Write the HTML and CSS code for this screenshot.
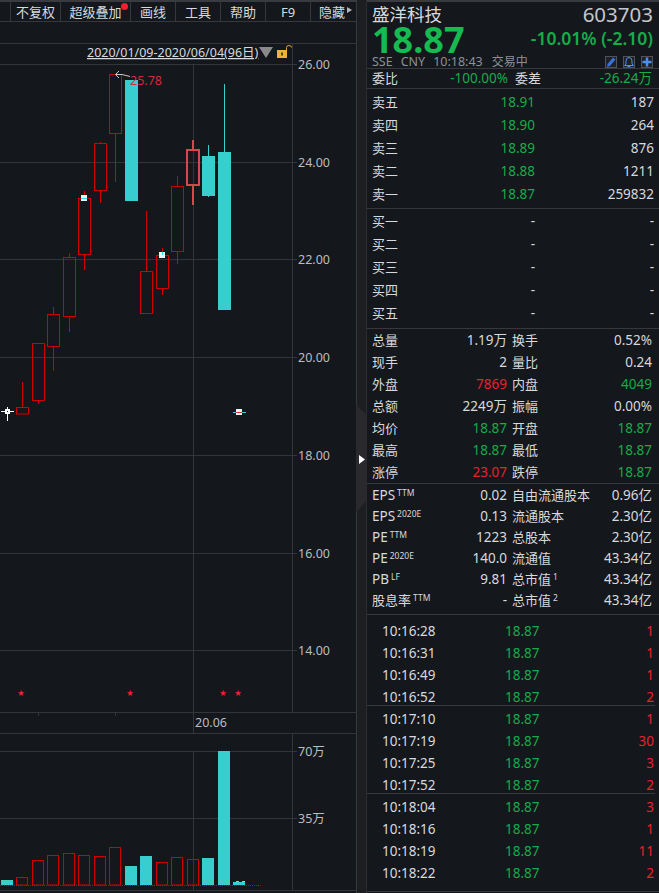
FILE: index.html
```html
<!DOCTYPE html>
<html lang="zh-CN">
<head>
<meta charset="utf-8">
<title>盛洋科技 603703</title>
<link rel="stylesheet" href="styles.css">
</head>
<body>
<div class="app">
  <section class="chart-col">
    <nav class="toolbar">
      <span class="tool tool-blank"></span>
      <span class="tool tool-w50">不复权</span>
      <span class="tool tool-w70">超级叠加<i class="dot"></i></span>
      <span class="tool">画线</span>
      <span class="tool">工具</span>
      <span class="tool">帮助</span>
      <span class="tool">F9</span>
      <span class="tool tool-last">隐藏<i class="more"></i></span>
    </nav>
    <div class="band"></div>
    <svg class="chart" viewBox="0 43 356 850" width="356" height="850" xmlns="http://www.w3.org/2000/svg">
      <g class="grid">
        <path d="M0 64.5H297M0 162.5H297M0 259.5H297M0 357.5H297M0 455.5H297M0 553.5H297M0 650.5H297"/>
        <path d="M0 751.5H297M0 818.5H297"/>
        <path d="M193.5 64V733M193.5 751V890M292.5 43V712M292.5 733V890"/>
        <path d="M0 43.5H356M0 712.5H356M0 733.5H356M0 890.5H356"/>
        <path d="M38.5 712V716M115.5 712V716"/>
      </g>
      <g class="axis">
        <text x="298" y="69">26.00</text>
        <text x="298" y="167">24.00</text>
        <text x="298" y="264">22.00</text>
        <text x="298" y="362">20.00</text>
        <text x="298" y="460">18.00</text>
        <text x="298" y="558">16.00</text>
        <text x="298" y="655">14.00</text>
        <text x="195" y="727">20.06</text>
        <text x="298" y="756">70万</text>
        <text x="298" y="823">35万</text>
      </g>
      <text class="range" x="87" y="57">2020/01/09-2020/06/04(96日)</text>
      <polygon class="tri" points="259,47 273,47 266,58"/>
      <rect class="lock" x="277" y="50" width="10" height="8"/>
      <rect class="lock-hole" x="281" y="52.5" width="2" height="3"/>
      <path class="shackle" d="M286.5 50V47.5Q286.5 45.5 289 45.5Q291.5 45.5 291.5 47.5"/>

      <g class="up">
        <path d="M22.5 382V407M38.5 400V404M53.5 307V314M53.5 346V371M69.5 253V257M69.5 316V332M84.5 191V198M84.5 254V270M100.5 142V143M100.5 190V203M115.5 133V182M146.5 211V271M162.5 248V255M162.5 288V295M177.5 176V186M177.5 251V264"/>
        <rect x="16.5" y="407.5" width="12" height="6.5"/>
        <rect x="32.5" y="343.5" width="12" height="57"/>
        <rect x="47.5" y="314.5" width="12" height="32"/>
        <rect x="63.5" y="257.5" width="12" height="59"/>
        <rect x="78.5" y="198.5" width="12" height="56"/>
        <rect x="94.5" y="143.5" width="12" height="47"/>
        <rect x="109.5" y="74.5" width="12" height="59"/>
        <rect x="140.5" y="271.5" width="12" height="42"/>
        <rect x="156.5" y="255.5" width="12" height="33"/>
        <rect x="171.5" y="186.5" width="12" height="65"/>
      </g>
      <g class="up-hi">
        <path d="M193 140V150M193 185V205"/>
        <rect x="187" y="150" width="12" height="35"/>
      </g>
      <g class="down">
        <rect x="125" y="80" width="13" height="121"/>
        <rect x="202" y="156" width="13" height="40"/>
        <rect x="218" y="152" width="13" height="158"/>
        <rect x="208" y="145" width="1" height="52"/>
        <rect x="224" y="84" width="1" height="68"/>
        <rect x="233" y="412" width="13" height="1"/>
      </g>
      <g class="marks">
        <rect x="81" y="195" width="6" height="6"/>
        <rect x="159" y="252" width="6" height="6"/>
        <rect x="236" y="409" width="6" height="6"/>
      </g>
      <path class="mark-cy" d="M81 198.5H87M162.5 252V255"/>
      <path class="mark-rd" d="M236 412.5H242"/>
      <path class="cross" d="M1 411.5H14M7.5 407V421"/>
      <rect class="cross-core" x="5" y="409" width="5" height="5"/>
      <rect class="cross-hole" x="7" y="411" width="1" height="1"/>
      <path class="note" d="M116 74.5L122 74.5L130 76.5M119 71L115.5 74.5L119 78"/>
      <text class="hi" x="130" y="85">25.78</text>
      <g class="stars">
        <text x="21" y="695">★</text>
        <text x="130" y="695">★</text>
        <text x="223" y="695">★</text>
        <text x="238" y="695">★</text>
      </g>

      <g class="up">
        <rect x="16.5" y="877.5" width="11" height="7.5"/>
        <rect x="32.5" y="860.5" width="11" height="24.5"/>
        <rect x="47.5" y="855.5" width="11" height="29.5"/>
        <rect x="63.5" y="853.5" width="11" height="31.5"/>
        <rect x="78.5" y="855.5" width="11" height="29.5"/>
        <rect x="94.5" y="856.5" width="11" height="28.5"/>
        <rect x="109.5" y="847.5" width="11" height="37.5"/>
        <rect x="156.5" y="862.5" width="11" height="22.5"/>
        <rect x="171.5" y="857.5" width="11" height="27.5"/>
        <rect x="187.5" y="859.5" width="11" height="25.5"/>
      </g>
      <g class="down">
        <rect x="1" y="880" width="12" height="5"/>
        <rect x="125" y="866" width="12" height="19"/>
        <rect x="140" y="856" width="12" height="29"/>
        <rect x="202" y="858" width="12" height="27"/>
        <rect x="218" y="751" width="12" height="134"/>
        <rect x="233" y="882" width="12" height="3"/>
      </g>
      <path class="vol-top" d="M236 881.5H239M242 881.5H245"/>
      <path class="base" d="M0 885.5H261"/>
    </svg>
  </section>

  <div class="strip">
    <svg class="strip-art" viewBox="0 0 11 893" width="11" height="893" xmlns="http://www.w3.org/2000/svg">
      <polygon class="strip-shape" points="0,405 11,415 11,500 0,512"/>
      <polygon class="strip-arrow" points="3,455 9,459.5 3,464"/>
    </svg>
  </div>

  <aside class="panel">
    <header class="head">
      <div class="head-row head-title">
        <span class="name">盛洋科技</span>
        <span class="code">603703</span>
      </div>
      <div class="head-row head-price">
        <span class="price">18.87</span>
        <span class="change">-10.01% (-2.10)</span>
      </div>
      <div class="head-row head-meta">
        <span class="meta"><span>SSE</span><span>CNY</span><span>10:18:43</span><span class="meta-cn">交易中</span></span>
        <span class="actions">
          <svg class="act" viewBox="0 0 10 10" width="12" height="12" xmlns="http://www.w3.org/2000/svg"><path class="act-fill" d="M7 0.5L9.5 2.500L4 9L1 10L1.500 7Z"/></svg>
          <svg class="act" viewBox="0 0 10 10" width="12" height="12" xmlns="http://www.w3.org/2000/svg"><path class="act-line" d="M5 0.500Q8 0.500 8 4V7L9.500 8.500H0.500L2 7V4Q2 0.500 5 0.500ZM3.500 9.500H6.500"/></svg>
          <svg class="act" viewBox="0 0 10 10" width="12" height="12" xmlns="http://www.w3.org/2000/svg"><path class="act-plus" d="M5 0.500V9.500M0.500 5H9.500"/></svg>
        </span>
      </div>
    </header>

    <div class="commit">
      <span class="cn">委比</span><span class="num green commit-v">-100.00%</span><span class="cn commit-l2">委差</span><span class="num green commit-r">-26.24万</span>
    </div>

    <div class="book book-ask">
      <div class="level"><span class="cn">卖五</span><span class="num green ar">18.91</span><span class="num ar">187</span></div>
      <div class="level"><span class="cn">卖四</span><span class="num green ar">18.90</span><span class="num ar">264</span></div>
      <div class="level"><span class="cn">卖三</span><span class="num green ar">18.89</span><span class="num ar">876</span></div>
      <div class="level"><span class="cn">卖二</span><span class="num green ar">18.88</span><span class="num ar">1211</span></div>
      <div class="level"><span class="cn">卖一</span><span class="num green ar">18.87</span><span class="num ar">259832</span></div>
    </div>
    <div class="book book-bid">
      <div class="level"><span class="cn">买一</span><span class="num ar">-</span><span class="num ar">-</span></div>
      <div class="level"><span class="cn">买二</span><span class="num ar">-</span><span class="num ar">-</span></div>
      <div class="level"><span class="cn">买三</span><span class="num ar">-</span><span class="num ar">-</span></div>
      <div class="level"><span class="cn">买四</span><span class="num ar">-</span><span class="num ar">-</span></div>
      <div class="level"><span class="cn">买五</span><span class="num ar">-</span><span class="num ar">-</span></div>
    </div>

    <div class="stats">
      <div class="stat"><div class="pair"><span class="cn">总量</span><span class="num">1.19万</span></div><div class="pair"><span class="cn">换手</span><span class="num">0.52%</span></div></div>
      <div class="stat"><div class="pair"><span class="cn">现手</span><span class="num">2</span></div><div class="pair"><span class="cn">量比</span><span class="num">0.24</span></div></div>
      <div class="stat"><div class="pair"><span class="cn">外盘</span><span class="num red">7869</span></div><div class="pair"><span class="cn">内盘</span><span class="num green">4049</span></div></div>
      <div class="stat"><div class="pair"><span class="cn">总额</span><span class="num">2249万</span></div><div class="pair"><span class="cn">振幅</span><span class="num">0.00%</span></div></div>
      <div class="stat"><div class="pair"><span class="cn">均价</span><span class="num green">18.87</span></div><div class="pair"><span class="cn">开盘</span><span class="num green">18.87</span></div></div>
      <div class="stat"><div class="pair"><span class="cn">最高</span><span class="num green">18.87</span></div><div class="pair"><span class="cn">最低</span><span class="num green">18.87</span></div></div>
      <div class="stat"><div class="pair"><span class="cn">涨停</span><span class="num red">23.07</span></div><div class="pair"><span class="cn">跌停</span><span class="num green">18.87</span></div></div>
    </div>

    <div class="funda">
      <div class="stat"><div class="pair"><span class="lab">EPS<sup>TTM</sup></span><span class="num">0.02</span></div><div class="pair"><span class="cn">自由流通股本</span><span class="num">0.96亿</span></div></div>
      <div class="stat"><div class="pair"><span class="lab">EPS<sup>2020E</sup></span><span class="num">0.13</span></div><div class="pair"><span class="cn">流通股本</span><span class="num">2.30亿</span></div></div>
      <div class="stat"><div class="pair"><span class="lab">PE<sup>TTM</sup></span><span class="num">1223</span></div><div class="pair"><span class="cn">总股本</span><span class="num">2.30亿</span></div></div>
      <div class="stat"><div class="pair"><span class="lab">PE<sup>2020E</sup></span><span class="num">140.0</span></div><div class="pair"><span class="cn">流通值</span><span class="num">43.34亿</span></div></div>
      <div class="stat"><div class="pair"><span class="lab">PB<sup>LF</sup></span><span class="num">9.81</span></div><div class="pair"><span class="cn">总市值<sup>1</sup></span><span class="num">43.34亿</span></div></div>
      <div class="stat"><div class="pair"><span class="cn">股息率<sup>TTM</sup></span><span class="num">-</span></div><div class="pair"><span class="cn">总市值<sup>2</sup></span><span class="num">43.34亿</span></div></div>
    </div>

    <div class="ticks ticks-a">
      <div class="tick"><span class="num">10:16:28</span><span class="num green ar">18.87</span><span class="num red ar">1</span></div>
      <div class="tick"><span class="num">10:16:31</span><span class="num green ar">18.87</span><span class="num red ar">1</span></div>
      <div class="tick"><span class="num">10:16:49</span><span class="num green ar">18.87</span><span class="num red ar">1</span></div>
      <div class="tick"><span class="num">10:16:52</span><span class="num green ar">18.87</span><span class="num red ar">2</span></div>
    </div>
    <div class="ticks ticks-b">
      <div class="tick"><span class="num">10:17:10</span><span class="num green ar">18.87</span><span class="num red ar">1</span></div>
      <div class="tick"><span class="num">10:17:19</span><span class="num green ar">18.87</span><span class="num red ar">30</span></div>
      <div class="tick"><span class="num">10:17:25</span><span class="num green ar">18.87</span><span class="num red ar">3</span></div>
      <div class="tick"><span class="num">10:17:52</span><span class="num green ar">18.87</span><span class="num red ar">2</span></div>
    </div>
    <div class="ticks ticks-c">
      <div class="tick"><span class="num">10:18:04</span><span class="num green ar">18.87</span><span class="num red ar">3</span></div>
      <div class="tick"><span class="num">10:18:16</span><span class="num green ar">18.87</span><span class="num red ar">1</span></div>
      <div class="tick"><span class="num">10:18:19</span><span class="num green ar">18.87</span><span class="num red ar">11</span></div>
      <div class="tick"><span class="num">10:18:22</span><span class="num green ar">18.87</span><span class="num red ar">2</span></div>
    </div>
    <div class="panel-end"></div>
  </aside>
</div>
</body>
</html>
```

FILE: styles.css
```css
* { box-sizing: border-box; }
html, body { margin: 0; padding: 0; background: #14171c; }
body {
  width: 659px;
  height: 893px;
  overflow: hidden;
  font-family: "Noto Sans", "Noto Sans CJK SC", sans-serif;
  color: #d6dade;
}
.app { display: flex; width: 659px; height: 893px; }

/* chart column */
.chart-col { width: 356px; flex: none; display: flex; flex-direction: column; }
.toolbar {
  display: flex;
  height: 22px;
  flex: none;
  border-top: 2px solid #3a3b40;
  border-bottom: 1px solid #36383c;
  font-size: 13px;
  line-height: 20px;
  color: #d6dade;
}
.tool {
  position: relative;
  width: 45px;
  flex: none;
  text-align: center;
  border-left: 1px solid #36383c;
}
.tool-blank { width: 10px; border-left: 0; }
.tool-w50 { width: 50px; }
.tool-w70 { width: 70px; }
.tool-last { width: 46px; text-align: left; padding-left: 8px; }
.dot {
  position: absolute;
  left: 60px;
  top: 1px;
  width: 7px;
  height: 7px;
  border-radius: 50%;
  background: #f02030;
}
.more {
  position: absolute;
  left: 36px;
  top: 5px;
  border-left: 5px solid #b5b8bc;
  border-top: 3.5px solid transparent;
  border-bottom: 3.5px solid transparent;
}
.band { height: 21px; flex: none; }
.chart { display: block; flex: none; }
.grid path { fill: none; stroke: #33353a; stroke-width: 1; }
.axis text { font-size: 12.5px; fill: #b9bdc2; }
.range { font-size: 12.5px; fill: #d6dade; text-decoration: underline; }
.tri { fill: #8a8a8a; }
.lock { fill: #f0b03a; }
.lock-hole { fill: #5a4010; }
.shackle { fill: none; stroke: #d9a238; stroke-width: 1; }
.up rect, .up path { fill: none; stroke: #d00000; stroke-width: 1; }
.up-hi rect, .up-hi path { fill: none; stroke: #d8474d; stroke-width: 2; }
.down rect { fill: #38cdce; }
.marks rect { fill: #eef2f2; }
.mark-cy { fill: none; stroke: #30e0e8; stroke-width: 1; }
.mark-rd { fill: none; stroke: #d03030; stroke-width: 1; }
.cross { fill: none; stroke: #ffffff; stroke-width: 1; }
.cross-core { fill: #ffffff; }
.cross-hole { fill: #14171c; }
.note { fill: none; stroke: #c5c8cc; stroke-width: 1; }
.hi { font-size: 12.5px; fill: #d8283a; }
.stars text { font-size: 7px; fill: #ee2233; text-anchor: middle; }
.vol-top { fill: none; stroke: #d8c050; stroke-width: 1; }
.base { fill: none; stroke: #d00000; stroke-width: 1; stroke-dasharray: 1 1; }

/* strip */
.strip { width: 11px; flex: none; background: #1d1e22; border-left: 1px solid #36383c; border-right: 1px solid #2c2d31; }
.strip-art { display: block; margin-left: -1px; }
.strip-shape { fill: #2a2a2e; }
.strip-arrow { fill: #ffffff; }

/* quote panel */
.panel { width: 292px; flex: none; display: flex; flex-direction: column; font-size: 13.5px; }
.cn { font-size: 13px; }
.num { font-size: 13.5px; }
.green { color: #16ac48; }
.red { color: #e8222f; }
.ar { text-align: right; }

.head { height: 68px; flex: none; padding: 0 5px; border-top: 2px solid #3a3b40; }
.head-row { display: flex; justify-content: space-between; align-items: center; }
.head-title { height: 24px; }
.name { font-size: 17.5px; line-height: 24px; color: #d6dade; }
.code { font-size: 20.5px; line-height: 24px; color: #c3c7cb; padding-right: 1px; }
.head-price { height: 26px; margin-top: 1px; }
.price { font-size: 36px; line-height: 26px; font-weight: 700; color: #16ba50; }
.change { font-size: 17.5px; line-height: 24px; font-weight: 600; color: #16ac48; padding-right: 1px; position: relative; top: -2px; }
.head-meta { height: 13px; margin-top: 2px; }
.meta { display: flex; gap: 8px; font-size: 12.5px; line-height: 13px; color: #8d9196; }
.meta-cn { font-size: 12px; margin-left: 1px; }
.actions { display: flex; gap: 6px; padding-right: 1px; }
.act { display: block; background: #1e2126; border: 1px solid #50535a; }
.act-fill { fill: #3a6fd8; }
.act-line { fill: none; stroke: #4a90f0; stroke-width: 1; }
.act-plus { fill: none; stroke: #4a90f0; stroke-width: 2.5; }

.commit {
  height: 20px;
  flex: none;
  display: grid;
  grid-template-columns: 40px 96px 85px 1fr;
  padding: 0 7px 0 5px;
  line-height: 19px;
  border-top: 1px solid #36383c;
}
.commit-v { text-align: right; }
.commit-l2 { padding-left: 7px; }
.commit-r { text-align: right; }

.book { height: 120px; flex: none; border-top: 1px solid #36383c; }
.book-ask { padding-top: 2px; }
.book-bid { padding-top: 1px; }
.level {
  display: grid;
  grid-template-columns: 40px 123px 1fr;
  height: 23px;
  line-height: 23px;
  padding: 0 5px;
}

.stats { height: 155px; flex: none; border-top: 1px solid #36383c; }
.funda { height: 131px; flex: none; border-top: 1px solid #36383c; padding-top: 1px; }
.stat {
  display: grid;
  grid-template-columns: 135px 1fr;
  column-gap: 5px;
  height: 22px;
  line-height: 22px;
  padding: 0 7px 0 5px;
}
.funda .stat { height: 21px; line-height: 21px; }
.pair { display: flex; justify-content: space-between; }
.lab { font-size: 13.5px; }
sup { font-size: 8.5px; line-height: 0; vertical-align: 4px; margin-left: 2px; }

.ticks { flex: none; border-top: 1px solid #36383c; }
.ticks-a { height: 91px; padding-top: 5px; }
.ticks-b { height: 88px; padding-top: 2px; margin-right: 4px; }
.ticks-c { height: 98px; padding-top: 2px; margin-right: 4px; }
.tick {
  display: grid;
  grid-template-columns: 123px 34px 1fr;
  height: 22px;
  line-height: 22px;
  padding: 0 5px 0 15px;
}
.ticks-b .tick, .ticks-c .tick { padding-right: 1px; }
.panel-end { height: 2px; flex: none; border-top: 1px solid #36383c; }
```
